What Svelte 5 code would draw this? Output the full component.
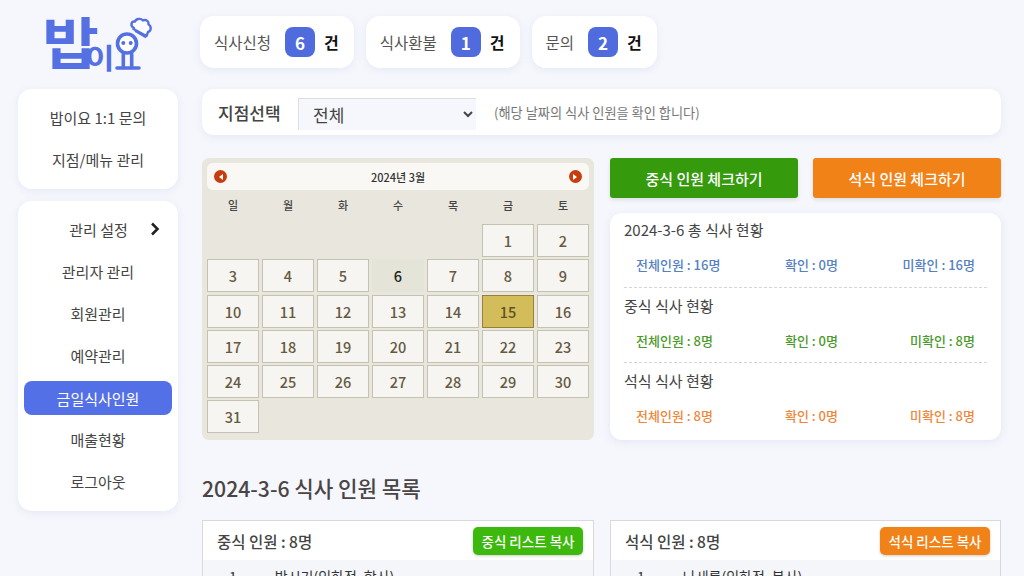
<script>
  const pills = [
    { label: '식사신청', n: 6 },
    { label: '식사환불', n: 1 },
    { label: '문의', n: 2 }
  ]
  const menu = ['관리자 관리', '회원관리', '예약관리', '금일식사인원', '매출현황', '로그아웃']
  const week = ['일', '월', '화', '수', '목', '금', '토']
  // march 2024 starts on a friday
  const days = [...Array(5).fill(0), ...Array.from({ length: 31 }, (_, i) => i + 1)]
  const stats = [
    { title: '2024-3-6 총 식사 현황', tone: 'blue', total: 16, ok: 0, miss: 16 },
    { title: '중식 식사 현황', tone: 'green', total: 8, ok: 0, miss: 8 },
    { title: '석식 식사 현황', tone: 'orange', total: 8, ok: 0, miss: 8 }
  ]
  const lists = [
    { title: '중식 인원 : 8명', copy: '중식 리스트 복사', tone: 'green', first: '박시기(인하점, 학사)' },
    { title: '석식 인원 : 8명', copy: '석식 리스트 복사', tone: 'orange', first: '나새롬(인하점, 복사)' }
  ]
</script>

<div class="page">
  <aside>
    <div class="logo">
      <svg viewBox="0 0 160 89" width="160" height="89" role="img" aria-label="밥이요">
        <text transform="translate(24.200 64) scale(1.100 1)" class="bap">밥</text>
        <text transform="translate(67 69) scale(1.150 1)" class="i">이</text>
        <path
          d="M116 28c-4-2-3-7 1-6.500 1-3 6-3.500 8-1 3-1.500 6 .5 5.500 4 3 1.500 3 6.500-.5 7.500l-1.500 4-13-7z"
          fill="#fff" stroke="#5470e2" stroke-width="2.400" stroke-linejoin="round"
        />
        <path d="M117 31l11 6.500" stroke="#5470e2" stroke-width="2" />
        <circle cx="109" cy="43.500" r="9.500" fill="#fff" stroke="#5470e2" stroke-width="3.600" />
        <circle cx="105.300" cy="43" r="2" fill="#5470e2" />
        <circle cx="112.700" cy="43" r="2" fill="#5470e2" />
        <path d="M105.300 54v13M113.700 54v13M99 68h22" fill="none" stroke="#5470e2" stroke-width="3.600" stroke-linecap="round" />
      </svg>
    </div>

    <nav class="card">
      <a href="#top">밥이요 1:1 문의</a>
      <a href="#top">지점/메뉴 관리</a>
    </nav>

    <nav class="card second">
      <a href="#top" class="setting">
        관리 설정
        <svg viewBox="0 0 10 14" width="10" height="14" aria-hidden="true">
          <path d="M2 1.500l5.500 5.500L2 12.500" fill="none" stroke="#222" stroke-width="2.600" />
        </svg>
      </a>
      {#each menu as item}
        <a href="#top" class:active={item === '금일식사인원'}>{item}</a>
      {/each}
    </nav>
  </aside>

  <main>
    <div class="pills">
      {#each pills as p}
        <div class="pill">
          <span class="pill-label">{p.label}</span>
          <b class="count">{p.n}</b>
          <b class="unit">건</b>
        </div>
      {/each}
    </div>

    <div class="filter">
      <label for="branch">지점선택</label>
      <select id="branch"><option>전체</option></select>
      <span class="note">(해당 날짜의 식사 인원을 확인 합니다)</span>
    </div>

    <div class="board">
      <section class="calendar">
        <header>
          <span class="arrow"><i class="left"></i></span>
          <strong>2024년 3월</strong>
          <span class="arrow"><i class="right"></i></span>
        </header>
        <div class="week">
          {#each week as w}<span>{w}</span>{/each}
        </div>
        <div class="days">
          {#each days as d}
            {#if d === 0}
              <span class="blank"></span>
            {:else}
              <span class="day" class:today={d === 6} class:picked={d === 15}>{d}</span>
            {/if}
          {/each}
        </div>
      </section>

      <section class="side">
        <div class="checks">
          <button class="green">중식 인원 체크하기</button>
          <button class="orange">석식 인원 체크하기</button>
        </div>
        <div class="summary">
          {#each stats as s}
            <div class="block">
              <h3>{s.title}</h3>
              <p class="tone-{s.tone}">
                <span>전체인원 : {s.total}명</span>
                <span>확인 : {s.ok}명</span>
                <span>미확인 : {s.miss}명</span>
              </p>
            </div>
          {/each}
        </div>
      </section>
    </div>

    <h2>2024-3-6 식사 인원 목록</h2>

    <div class="lists">
      {#each lists as l}
        <section class="list">
          <header>
            <h4>{l.title}</h4>
            <button class={l.tone}>{l.copy}</button>
          </header>
          <div class="row"><span>1</span><span>{l.first}</span></div>
        </section>
      {/each}
    </div>
  </main>
</div>

<style>
  :global(body) {
    margin: 0;
    background: #f6f7fc;
    overflow: hidden;
    font-family: 'Noto Sans CJK KR', 'Noto Sans', sans-serif;
  }
  .page {
    display: flex;
    height: 576px;
    overflow: hidden;
    color: #444;
  }
  aside {
    width: 160px;
    margin-left: 18px;
    flex: none;
  }
  .logo {
    height: 89px;
  }
  .logo svg {
    display: block;
  }
  .logo text {
    fill: #5470e2;
    font-weight: 700;
  }
  .bap {
    font-size: 56px;
  }
  .i {
    font-size: 28px;
  }
  .card {
    background: #fff;
    border-radius: 14px;
    box-shadow: 0 2px 8px rgba(90, 110, 200, 0.1);
    display: flex;
    flex-direction: column;
    padding: 7px 6px 9px;
  }
  .card a {
    height: 42px;
    display: flex;
    align-items: center;
    justify-content: center;
    font-size: 15px;
    color: #444;
    text-decoration: none;
    border-radius: 8px;
  }
  .second {
    margin-top: 12px;
  }
  .card .setting {
    gap: 22px;
    padding-left: 33px;
  }
  .card .active {
    background: #5470e6;
    color: #fff;
    height: 34px;
    margin: 5px 0 3px;
  }
  main {
    margin-left: 24px;
    width: 799px;
    flex: none;
  }
  .pills {
    display: flex;
    gap: 12px;
    margin: 16px 0 0 -2px;
  }
  .pill {
    height: 52px;
    padding: 0 15px 0 14px;
    background: #fff;
    border-radius: 14px;
    box-shadow: 0 2px 8px rgba(90, 110, 200, 0.1);
    display: flex;
    align-items: center;
    font-size: 15.500px;
    color: #555;
  }
  .count {
    width: 30px;
    height: 30px;
    margin: 0 9px 0 14px;
    border-radius: 8px;
    background: #4f6bdd;
    color: #fff;
    font-size: 17px;
    display: flex;
    align-items: center;
    justify-content: center;
  }
  .unit {
    color: #111;
    font-size: 16px;
  }
  .filter {
    margin-top: 21px;
    height: 46px;
    background: #fff;
    border-radius: 12px;
    box-shadow: 0 2px 8px rgba(90, 110, 200, 0.1);
    display: flex;
    align-items: center;
    padding-left: 16px;
  }
  label {
    font-size: 17px;
    font-weight: 500;
    width: 80px;
  }
  select {
    width: 178px;
    height: 32px;
    margin-top: 3px;
    padding-left: 10px;
    border: 1px solid #ddd;
    border-width: 1px 0 0 1px;
    background: #f6f7fc;
    font: inherit;
    font-size: 17px;
    color: #444;
  }
  .note {
    margin-left: 18px;
    font-size: 13.200px;
    color: #777;
  }
  .board {
    margin-top: 23px;
    display: flex;
    gap: 16px;
  }
  .calendar {
    width: 392px;
    height: 282px;
    flex: none;
    box-sizing: border-box;
    padding: 5px;
    background: #e9e7dd;
    border-radius: 7px;
  }
  .calendar header {
    height: 27px;
    background: #f9f8f4;
    border-radius: 6px;
    display: flex;
    align-items: center;
    justify-content: space-between;
    padding: 0 7px;
    font-size: 11px;
  }
  .calendar strong {
    font-weight: 500;
    color: #333;
  }
  .arrow {
    width: 13px;
    height: 13px;
    border-radius: 50%;
    background: #c63d0f;
    display: flex;
    align-items: center;
    justify-content: center;
  }
  .arrow i {
    border: 3px solid transparent;
    border-left-width: 0;
    border-right: 4px solid #fff;
  }
  .arrow i.right {
    border-right-width: 0;
    border-left: 4px solid #fff;
  }
  .week {
    display: grid;
    grid-template-columns: repeat(7, 52px);
    column-gap: 3px;
    height: 30px;
    margin-bottom: 4px;
    align-items: center;
    justify-items: center;
    font-size: 11px;
    font-weight: 500;
    color: #444;
  }
  .days {
    display: grid;
    grid-template-columns: repeat(7, 52px);
    grid-auto-rows: 33px;
    gap: 2.300px 3px;
  }
  .day {
    box-sizing: border-box;
    border: 1px solid #c5c2b2;
    background: #f6f5f2;
    display: flex;
    align-items: center;
    justify-content: center;
    font-size: 14.500px;
    font-weight: 500;
    color: #66593f;
  }
  .day.today {
    border-color: transparent;
    background: #e5e4d9;
    color: #222;
  }
  .day.picked {
    border-color: #9a7f35;
    background: #d3bd5a;
    color: #5c5026;
  }
  .side {
    width: 391px;
    flex: none;
  }
  .checks {
    display: flex;
    justify-content: space-between;
  }
  button {
    border: 0;
    color: #fff;
    font: inherit;
    font-weight: 500;
  }
  .checks button {
    width: 188px;
    height: 40px;
    border-radius: 3px;
    font-size: 15px;
    box-shadow: 0 2px 4px rgba(0, 0, 0, 0.1);
  }
  .checks .green {
    background: #359a0c;
  }
  .checks .orange,
  .list .orange {
    background: #f08218;
  }
  .summary {
    margin-top: 15px;
    height: 227px;
    box-sizing: border-box;
    padding: 0 14px;
    background: #fff;
    border-radius: 12px;
    box-shadow: 0 2px 8px rgba(90, 110, 200, 0.12);
  }
  .block {
    height: 75px;
    padding-top: 1px;
    box-sizing: border-box;
    border-bottom: 1px dashed #d6d6d6;
  }
  .block:first-child {
    padding-top: 0;
  }
  .block:last-child {
    border: 0;
  }
  h3 {
    margin: 0;
    height: 34px;
    font-size: 15px;
    font-weight: 400;
    line-height: 34px;
  }
  .block p {
    margin: 0;
    padding: 0 12px;
    height: 34px;
    display: flex;
    justify-content: space-between;
    align-items: center;
    font-size: 13px;
    font-weight: 500;
  }
  .tone-blue {
    color: #5580c2;
  }
  .tone-green {
    color: #4a9a2a;
  }
  .tone-orange {
    color: #ee873a;
  }
  h2 {
    margin: 31px 0 0;
    font-size: 21.200px;
    line-height: 34px;
    font-weight: 500;
    color: #4a4545;
  }
  .lists {
    margin-top: 15px;
    display: flex;
    gap: 16px;
  }
  .list {
    width: 392px;
    flex: none;
    box-sizing: border-box;
    border: 1px solid #d8d8de;
    background: #f4f6fa;
  }
  .list:last-child {
    width: 391px;
  }
  .list header {
    height: 39px;
    background: #fff;
    display: flex;
    align-items: center;
    justify-content: space-between;
    padding: 0 10px 0 14px;
  }
  h4 {
    margin: 0;
    font-size: 15.500px;
    font-weight: 500;
  }
  .list button {
    height: 28px;
    width: 110px;
    padding: 0;
    border-radius: 5px;
    font-size: 13.500px;
    box-shadow: 0 1px 3px rgba(0, 0, 0, 0.2);
  }
  .list .green {
    background: #3cb90c;
  }
  .row {
    display: flex;
    padding: 6px 0 0 26px;
    gap: 38px;
    font-size: 14px;
    color: #333;
  }
</style>
